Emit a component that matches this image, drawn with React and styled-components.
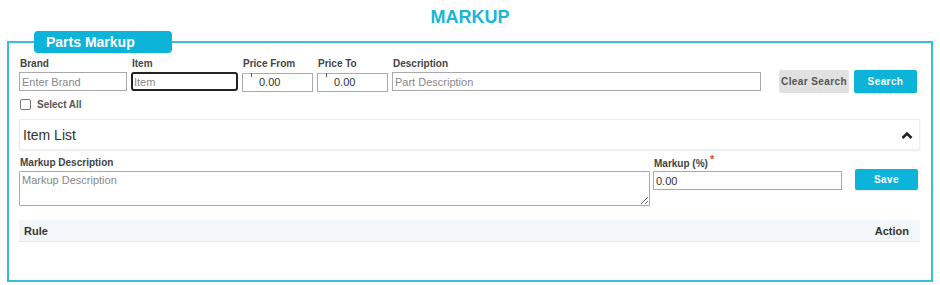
import React from 'react'
import styled, { createGlobalStyle } from 'styled-components'

const GlobalStyle = createGlobalStyle`
  body {
    margin: 0;
    background: #fff;
    font-family: "Liberation Sans", Arial, sans-serif;
  }
`

const Page = styled.div`
  width: 940px;
  height: 285px;
  padding: 0 7px;
  box-sizing: border-box;
`

const Title = styled.h1`
  margin: 0;
  height: 31px;
  padding-top: 7px;
  box-sizing: border-box;
  text-align: center;
  font-size: 18px;
  font-weight: 700;
  line-height: 20px;
  color: #1ab5d8;
`

const Fieldset = styled.fieldset`
  margin: 0;
  width: 926px;
  height: 251px;
  box-sizing: border-box;
  border: 2px solid #3bbcd9;
  padding: 4px 11px 0 10px;
`

const Legend = styled.legend`
  margin-left: 15px;
  padding: 0 0 0 12px;
  width: 138px;
  height: 22px;
  box-sizing: border-box;
  background: #0cb4d9;
  border-radius: 4px;
  color: #fff;
  font-size: 14px;
  font-weight: 700;
  line-height: 22px;
`

const SearchRow = styled.div`
  display: grid;
  grid-template-columns: 108px 107px 71px 71px 369px 1fr 70px 63px;
  column-gap: 4px;
  align-items: end;
`

const Field = styled.div`
  display: flex;
  flex-direction: column;
`

const Label = styled.label`
  font-size: 10px;
  font-weight: 700;
  color: #444;
  line-height: 14px;
  height: 15px;
  padding-left: 1px;
`

const Required = styled.span`
  color: #e43d3d;
  font-size: 11px;
  margin-left: 2px;
  position: relative;
  top: -4px;
`

const Input = styled.input`
  height: 19px;
  box-sizing: border-box;
  border: 1px solid ${p => (p.$focused ? '#222' : '#a9a9a9')};
  border-width: ${p => (p.$focused ? '2px' : '1px')};
  border-radius: ${p => (p.$focused ? '3px' : '0')};
  padding: 0 0 0 ${p => (p.$indent ? '16px' : p.$focused ? '1px' : '2px')};
  font-family: "Liberation Sans", Arial, sans-serif;
  font-size: 11px;
  color: #333;
  outline: none;
  width: 100%;

  &::placeholder {
    color: #888;
  }
`

const PriceWrap = styled.div`
  position: relative;
  height: 19px;

  &::before {
    content: '';
    position: absolute;
    left: 1px;
    top: 1px;
    width: 9px;
    height: 1px;
    background: #bbb;
  }
  &::after {
    content: '';
    position: absolute;
    left: 9px;
    top: 1px;
    width: 1px;
    height: 4px;
    background: #555;
  }
`

const Button = styled.button`
  height: ${p => p.$h || 23}px;
  border: none;
  border-radius: 2px;
  background: ${p => (p.$primary ? '#0cb4d9' : '#e1e1e1')};
  color: ${p => (p.$primary ? '#fff' : '#555')};
  font-family: "Liberation Sans", Arial, sans-serif;
  font-size: 10px;
  font-weight: 700;
  letter-spacing: 0.4px;
  white-space: nowrap;
  padding: 0;
  cursor: pointer;
  box-shadow: ${p => (p.$primary ? '0 1px 1px rgba(0,0,0,0.1)' : 'none')};
`

const SearchButtons = styled.div`
  grid-column: 7 / 9;
  display: flex;
  gap: 5px;
  margin-bottom: -2px;
  margin-left: -4px;
`

const CheckRow = styled.label`
  display: flex;
  align-items: center;
  gap: 6px;
  margin-top: 6px;
  padding-left: 1px;
  font-size: 10px;
  font-weight: 700;
  color: #555;
  height: 14px;
`

const Check = styled.span`
  width: 9px;
  height: 9px;
  border: 1px solid #777;
  border-radius: 2px;
  background: #fff;
`

const Panel = styled.div`
  margin-top: 8px;
  height: 31px;
  box-sizing: border-box;
  border: 1px solid #eee;
  box-shadow: 0 1px 2px rgba(0, 0, 0, 0.08);
  display: flex;
  align-items: center;
  justify-content: space-between;
  padding: 0 6px 0 3px;
  font-size: 14px;
  color: #333;
`

const MarkupRow = styled.div`
  display: grid;
  grid-template-columns: 631px 189px 63px;
  column-gap: 3px;
  margin-top: 6px;
  align-items: start;
`

const TextArea = styled.textarea`
  height: 35px;
  box-sizing: border-box;
  border: 1px solid #a9a9a9;
  border-radius: 1px;
  padding: 2px;
  font-family: "Liberation Sans", Arial, sans-serif;
  font-size: 11px;
  resize: vertical;
  outline: none;

  &::placeholder {
    color: #888;
  }
`

const SaveCell = styled.div`
  padding-top: 13px;
  margin-left: 10px;
`

const TableHead = styled.div`
  margin-top: 14px;
  height: 21px;
  background: #f4f7fa;
  border-bottom: 1px solid #e4e8ec;
  display: flex;
  align-items: center;
  justify-content: space-between;
  padding: 0 11px 0 5px;
  font-family: "Liberation Sans Narrow", "Liberation Sans", Arial, sans-serif;
  font-size: 11px;
  font-weight: 700;
  color: #333;
`

const ChevronUp = () => (
  <svg width="12" height="8" viewBox="0 0 12 8">
    <path d="M1.5 7 L6 2.5 L10.5 7" fill="none" stroke="#222" strokeWidth="2.6" />
  </svg>
)

export default function App() {
  return (
    <Page>
      <GlobalStyle />
      <Title>MARKUP</Title>
      <Fieldset>
        <Legend>Parts Markup</Legend>
        <SearchRow>
          <Field>
            <Label>Brand</Label>
            <Input placeholder="Enter Brand" />
          </Field>
          <Field>
            <Label>Item</Label>
            <Input placeholder="Item" $focused />
          </Field>
          <Field>
            <Label>Price From</Label>
            <PriceWrap>
              <Input defaultValue="0.00" $indent />
            </PriceWrap>
          </Field>
          <Field>
            <Label>Price To</Label>
            <PriceWrap>
              <Input defaultValue="0.00" $indent />
            </PriceWrap>
          </Field>
          <Field>
            <Label>Description</Label>
            <Input placeholder="Part Description" />
          </Field>
          <SearchButtons>
            <Button style={{ width: 70 }}>Clear Search</Button>
            <Button $primary style={{ width: 63 }}>Search</Button>
          </SearchButtons>
        </SearchRow>
        <CheckRow>
          <Check />
          Select All
        </CheckRow>
        <Panel>
          Item List
          <ChevronUp />
        </Panel>
        <MarkupRow>
          <Field>
            <Label>Markup Description</Label>
            <TextArea placeholder="Markup Description" />
          </Field>
          <Field>
            <Label>
              Markup (%)<Required>*</Required>
            </Label>
            <Input defaultValue="0.00" />
          </Field>
          <SaveCell>
            <Button $primary $h={21} style={{ width: 63 }}>Save</Button>
          </SaveCell>
        </MarkupRow>
        <TableHead>
          <span>Rule</span>
          <span>Action</span>
        </TableHead>
      </Fieldset>
    </Page>
  )
}
